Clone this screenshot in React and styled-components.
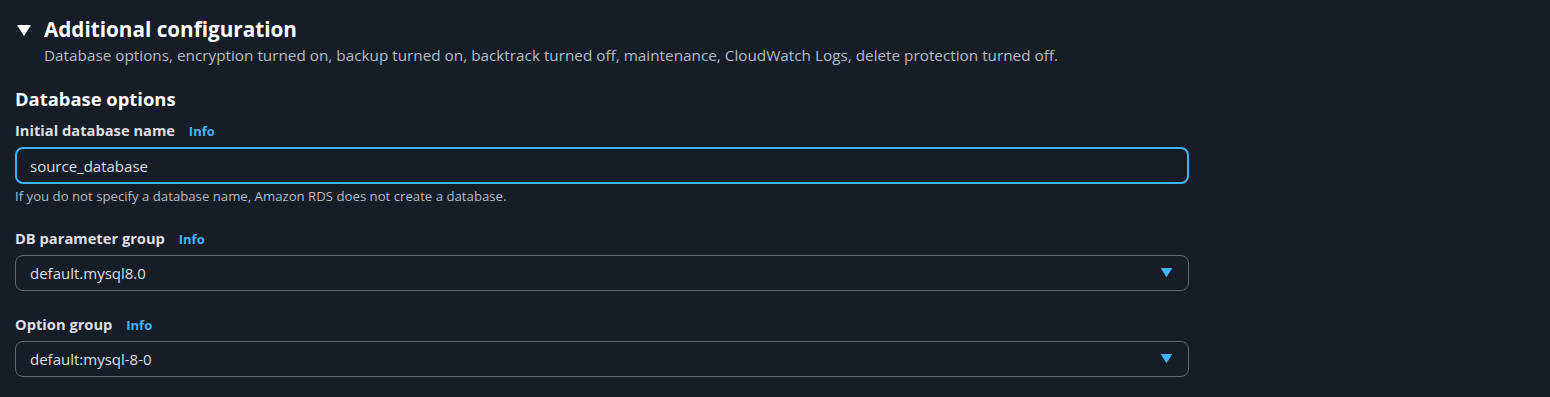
import React from 'react';
import styled, { createGlobalStyle } from 'styled-components';

const GlobalStyle = createGlobalStyle`
  body {
    margin: 0;
    background: #161d26;
    font-family: 'Open Sans', 'Noto Sans', sans-serif;
    color: #dedee3;
  }
`;

const fields = [
  {
    label: 'DB parameter group',
    value: 'default.mysql8.0',
    gap: 22,
  },
  {
    label: 'Option group',
    value: 'default:mysql-8-0',
    gap: 22,
  },
];

const App = () => {
  return (
    <>
      <GlobalStyle />
      <Page>
        <Expander>
          <Caret viewBox="0 0 14 12">
            <path d="M0 0 L14 0 L7 11 Z" fill="#ffffff" />
          </Caret>
          <HeaderText>
            <Title>Additional configuration</Title>
            <Description>
              Database options, encryption turned on, backup turned on, backtrack turned off, maintenance, CloudWatch Logs, delete protection turned off.
            </Description>
          </HeaderText>
        </Expander>

        <Section>
          <SectionTitle>Database options</SectionTitle>

          <Field gap={7}>
            <Label>
              Initial database name <InfoLink>Info</InfoLink>
            </Label>
            <Input focused defaultValue="source_database" />
            <Hint>If you do not specify a database name, Amazon RDS does not create a database.</Hint>
          </Field>

          {fields.map((f) => (
            <Field key={f.label} gap={f.gap}>
              <Label>
                {f.label} <InfoLink>Info</InfoLink>
              </Label>
              <Select>
                <span>{f.value}</span>
                <SelectArrow viewBox="0 0 14 12">
                  <path d="M0 0 L14 0 L7 11 Z" fill="#42b4ff" />
                </SelectArrow>
              </Select>
            </Field>
          ))}
        </Section>
      </Page>
    </>
  );
};

///STYLED COMPONENTS///
const Page = styled.div`
  padding: 14px 361px 0 15px;
`;

const Expander = styled.div`
  display: flex;
  align-items: flex-start;
  gap: 13px;
`;

const Caret = styled.svg`
  width: 14px;
  height: 12px;
  margin-top: 11px;
  margin-left: 2px;
  flex-shrink: 0;
`;

const HeaderText = styled.div`
  display: flex;
  flex-direction: column;
`;

const Title = styled.h2`
  margin: 0;
  font-size: 20.7px;
  line-height: 30px;
  font-weight: 700;
  color: #ffffff;
`;

const Description = styled.p`
  margin: 0;
  font-size: 15.3px;
  line-height: 22px;
  color: #b4bbc5;
`;

const Section = styled.div`
  margin-top: 20px;
  display: flex;
  flex-direction: column;
`;

const SectionTitle = styled.h3`
  margin: 0;
  font-size: 18.4px;
  line-height: 26px;
  font-weight: 700;
  color: #ffffff;
`;

const Field = styled.div`
  display: flex;
  flex-direction: column;
  margin-top: ${(p) => p.gap}px;
`;

const Label = styled.div`
  font-size: 14.7px;
  line-height: 22px;
  font-weight: 700;
  color: #dedee3;
  margin-bottom: 5px;
`;

const InfoLink = styled.a`
  margin-left: 10px;
  font-size: 13px;
  font-weight: 700;
  color: #42b4ff;
  cursor: pointer;
`;

const Input = styled.input`
  box-sizing: border-box;
  width: 100%;
  height: 37px;
  padding: 0 13px;
  border: 2px solid ${(p) => (p.focused ? '#42b4ff' : '#656871')};
  border-radius: 8px;
  background: #161d26;
  color: #dedee3;
  font-family: inherit;
  font-size: 15px;
  outline: none;
`;

const Hint = styled.div`
  margin-top: 3px;
  font-size: 13.2px;
  line-height: 18px;
  color: #b4bbc5;
`;

const Select = styled.div`
  box-sizing: border-box;
  display: flex;
  align-items: center;
  justify-content: space-between;
  height: 36px;
  padding: 0 15px 0 14px;
  border: 1px solid #656871;
  border-radius: 8px;
  font-size: 15px;
  color: #dedee3;
`;

const SelectArrow = styled.svg`
  width: 13px;
  height: 10px;
`;

export default App;
